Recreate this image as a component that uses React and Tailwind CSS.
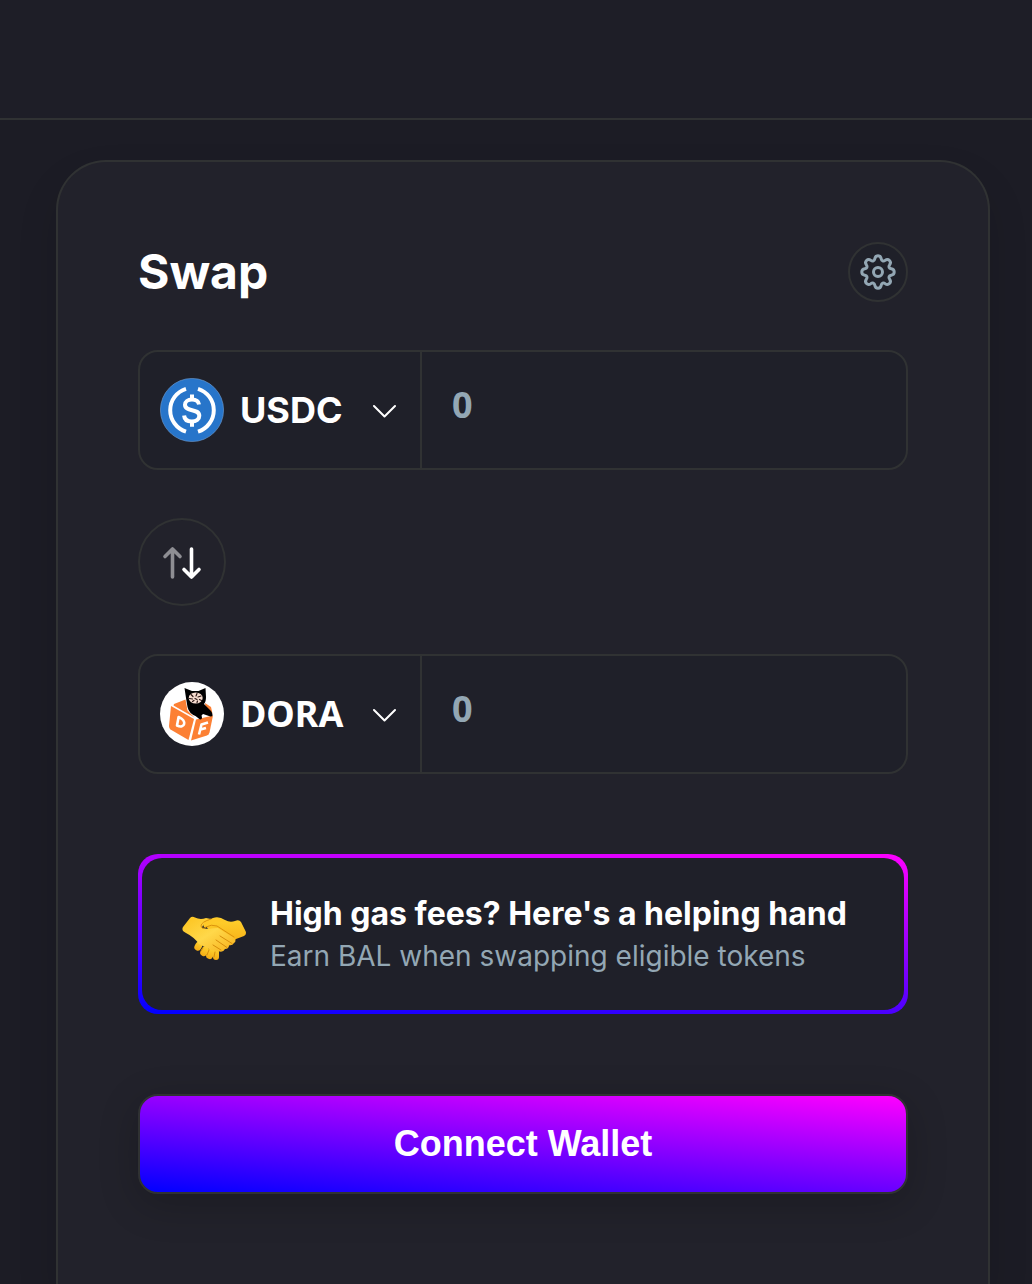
import React, { useState } from 'react';

function UsdcLogo() {
  return (
    <svg viewBox="0 0 64 64" className="w-16 h-16 shrink-0" aria-hidden="true">
      <circle cx="32" cy="32" r="31.6" fill="#2775ca" stroke="#6f9fd6" strokeWidth="0.6" />
      <g fill="none" stroke="#fff" strokeWidth="4">
        <path d="M26 10.8A22.4 22.4 0 0 0 26 53.6" />
        <path d="M38 10.8A22.4 22.4 0 0 1 38 53.6" />
        <path d="M39 26.5C38.4 23.2 35.8 21.6 32 21.6c-4.2 0-7 2.1-7 5.2 0 7.6 14.3 3.200 14.3 11 0 3.6-3 5.7-7.500 5.700-4.600 0-7.400-2.200-7.700-6" />
        <path d="M32 16.4v5M32 43.500v5.300" />
      </g>
    </svg>
  );
}

function DoraLogo() {
  return (
    <svg viewBox="0 0 64 64" className="w-16 h-16 shrink-0" aria-hidden="true">
      <circle cx="32" cy="32" r="32" fill="#fff" />
      <g fill="#fc8034">
        <path d="M14 22 25.5 17.5l2 11 7 7-21-12z" />
        <path d="M11 24 34 37 28.500 58 10.500 47.5Q9 46 9 44z" />
        <path d="M36 37.5 53 33.500 49.500 50.500Q49 52.500 47 53.5L31 58.500z" />
        <path d="M45 21 51 25 52.500 31.500 46 31z" />
      </g>
      <g fill="none" stroke="#fff" strokeWidth="2.6" strokeLinejoin="round">
        <path d="M18.600 35 17 43.500C25 47.500 27.500 38.500 18.600 35z" />
        <path d="M39 52.500 41.500 42.500 48 40.500M40.500 47.500 46 46" />
      </g>
      <path d="M24.500 6 32 9H38.500L45.500 6 46 15Q46 20 44 22L51 29Q54.500 34.500 50.500 34.500L43 32 41.500 33.500Q43 37.500 40 37.500L35.500 34Q29 31.500 27.500 25L26 16Z" fill="#000" />
      <ellipse cx="35.700" cy="16" rx="7" ry="5.500" fill="#f6dccf" />
      <path d="M31 12.500l2 2M37 11.500l-1 2.500M41 14l-3 1M29.500 16.500l3 .5M35 16.500l2 1M39.500 17.500l2 1M32.500 19.500l1.500-1M37 20.500l.5-1.500" fill="none" stroke="#2b1714" strokeWidth="1.200" strokeLinecap="round" />
    </svg>
  );
}

function ChevronIcon() {
  return (
    <svg viewBox="0 0 24 16" className="w-6 h-4 shrink-0" fill="none" stroke="#fff" strokeWidth="2" strokeLinecap="round" strokeLinejoin="round" aria-hidden="true">
      <path d="M2 4 12.500 14.500 23 4" />
    </svg>
  );
}

function GearIcon() {
  return (
    <svg viewBox="0 0 36 36" className="w-9 h-9" fill="none" stroke="#93a7b4" strokeWidth="3" strokeLinejoin="round" aria-hidden="true">
      <path d="M14.8 4.8C15.5 .8 20.5 .8 21.2 4.8C21.6 7 23.4 7.7 25.1 6.4C28.4 4 32 7.6 29.6 10.9C28.3 12.6 29 14.4 31.2 14.8C35.2 15.5 35.2 20.5 31.2 21.2C29 21.6 28.3 23.4 29.6 25.1C32 28.4 28.4 32 25.1 29.6C23.4 28.3 21.6 29 21.2 31.2C20.5 35.2 15.5 35.2 14.8 31.2C14.4 29 12.6 28.3 10.9 29.6C7.6 32 4 28.4 6.4 25.1C7.7 23.4 7 21.6 4.8 21.2C.8 20.5 .8 15.5 4.8 14.8C7 14.4 7.7 12.6 6.4 10.9C4 7.6 7.6 4 10.9 6.4C12.6 7.7 14.4 7 14.8 4.8Z" />
      <circle cx="18" cy="18" r="4.5" />
    </svg>
  );
}

function SwitchIcon() {
  return (
    <svg viewBox="0 0 40 36" className="w-10 h-9" fill="none" strokeWidth="3.6" strokeLinecap="round" strokeLinejoin="round" aria-hidden="true">
      <path d="M10.500 33V5M3 12.500 10.500 5 18 12.500" stroke="#8e8e93" />
      <path d="M29.500 5V33M22 25.500 29.500 33 37 25.500" stroke="#fff" />
    </svg>
  );
}

function HandshakeIcon() {
  return (
    <svg viewBox="0 0 64 44" className="mt-2 w-16 h-11 shrink-0" aria-hidden="true">
      <defs>
        <linearGradient id="skin" x1="0" y1="0" x2="0" y2="1">
          <stop offset="0" stopColor="#ffd22e" />
          <stop offset="1" stopColor="#f5ab13" />
        </linearGradient>
        <linearGradient id="palm" x1="0" y1="0" x2="1" y2="1">
          <stop offset="0" stopColor="#fcc21b" />
          <stop offset="0.5" stopColor="#ffd84a" />
          <stop offset="1" stopColor="#f6b01b" />
        </linearGradient>
      </defs>
      <g fill="url(#skin)">
        <path d="M53 5Q57 3 59 6L63.5 15Q65 18 62 20L54 23Q50 28 45 31L25 12Q26 4 31 2Q37 0 43 4Q48 7 53 5z" />
        <rect x="13" y="26" width="7" height="9" rx="3.5" transform="rotate(28 17 30)" />
        <rect x="19" y="30" width="7" height="10" rx="3.5" transform="rotate(28 22 35)" />
        <rect x="25" y="32" width="7" height="11" rx="3.5" transform="rotate(20 28 37)" />
        <rect x="31" y="33" width="6" height="11" rx="3" />
      </g>
      <path d="M8 2Q10 0 13 1.5Q18 4 24 2L29 3Q21 7 20 12L26 13Q31 12 36 12L52 22Q55 25 52 27Q50 30 47 29Q47 33 43 33Q41 37 36 35L29 34 17 28Q12 21 4 17Q-1 15 1 11z" fill="url(#palm)" />
      <path d="M22 11Q19 6 29 3Q38 0 44 7Q35 4 30 7Q26 12 22 11z" fill="#ffc928" />
      <path d="M29 3Q19 6 19 10Q20 14 24 11Q29 8 35 10L52 21" fill="none" stroke="#dc940c" strokeWidth="1" strokeLinecap="round" />
      <path d="M38 20 50 27.5M34 24 45 31.5M31 29 39 34M19 35 21 32M25 39 27 34M32 41 33 36" fill="none" stroke="#d68d0c" strokeWidth="1" strokeLinecap="round" />
    </svg>
  );
}

function TokenRow({ symbol, logo, nameClass }) {
  const [amount, setAmount] = useState('');

  return (
    <div className="flex h-[120px] rounded-[20px] border-2 border-[#303233] bg-[#1f2029]">
      <button type="button" className="flex w-[282px] shrink-0 items-center gap-4 border-r-2 border-[#303233] pl-5 pr-6 text-white">
        {logo}
        <span className={nameClass}>{symbol}</span>
        <span className="ml-auto"><ChevronIcon /></span>
      </button>
      <input
        type="text"
        inputMode="decimal"
        aria-label={`${symbol} amount`}
        placeholder="0"
        value={amount}
        onChange={(e) => setAmount(e.target.value)}
        className="min-w-0 flex-1 bg-transparent pl-[30px] pr-6 pb-2.5 font-['Noto_Sans',sans-serif] text-4xl font-bold text-white outline-none placeholder:text-[#93a7b4] placeholder:opacity-100"
      />
    </div>
  );
}

export default function App() {
  const [flipped, setFlipped] = useState(false);

  const rows = [
    <TokenRow key="usdc" symbol="USDC" logo={<UsdcLogo />} nameClass="text-4xl font-bold" />,
    <TokenRow key="dora" symbol="DORA" logo={<DoraLogo />} nameClass="font-['Noto_Sans',sans-serif] text-4xl font-bold" />,
  ];

  return (
    <div className="flex h-screen flex-col overflow-hidden bg-[#1c1c25] font-[Inter,sans-serif]">
      <header className="h-[120px] shrink-0 border-b-2 border-[#303233] bg-[#1e1e27]" />

      <main className="flex flex-1 flex-col pl-14 pr-[42px] pt-10">
        <section className="flex-1 shrink-0 rounded-t-[50px] border-2 border-b-0 border-[#303233] bg-[#22222b] p-20 shadow-[0_20px_40px_rgba(0,0,0,0.12)]">
          <div className="flex items-center justify-between">
            <h1 className="text-5xl font-bold text-white">Swap</h1>
            <button type="button" aria-label="Settings" className="flex h-[60px] w-[60px] items-center justify-center rounded-full border-2 border-[#303233] bg-[#1f2029]">
              <GearIcon />
            </button>
          </div>

          <div className="mt-12 flex flex-col gap-12">
            {rows[flipped ? 1 : 0]}
            <button
              type="button"
              aria-label="Switch tokens"
              onClick={() => setFlipped(!flipped)}
              className="flex h-[88px] w-[88px] items-center justify-center rounded-full border-2 border-[#303233] bg-[#22222b]"
            >
              <SwitchIcon />
            </button>
            {rows[flipped ? 0 : 1]}
          </div>

          <div className="mt-20 rounded-[20px] bg-[linear-gradient(5deg,#0000ff,#ff00ff)] p-1">
            <div className="flex h-[152px] items-center gap-6 rounded-[20px] bg-[#1f2029] px-10">
              <HandshakeIcon />
              <div>
                <p className="text-[32px] leading-[44px] font-bold text-white">High gas fees? Here's a helping hand</p>
                <p className="text-[28px] leading-10 text-[#93a7b4]">Earn BAL when swapping eligible tokens</p>
              </div>
            </div>
          </div>

          <button
            type="button"
            className="mt-20 h-[100px] w-full rounded-[20px] border-2 border-[#303233] bg-[linear-gradient(5deg,#0000ff,#ff00ff)] font-['Liberation_Sans',sans-serif] text-4xl font-bold text-white shadow-[0_10px_40px_rgba(0,0,0,0.2)]"
          >
            Connect Wallet
          </button>
        </section>
      </main>
    </div>
  );
}
